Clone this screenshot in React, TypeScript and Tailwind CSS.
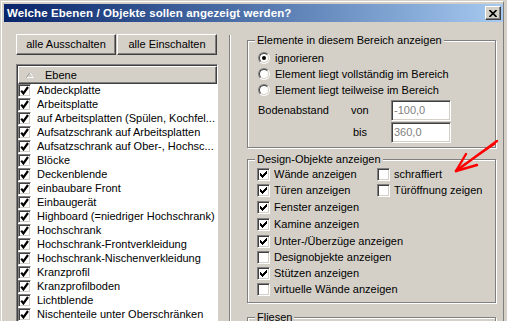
import React from 'react'

const layers = [
  'Abdeckplatte',
  'Arbeitsplatte',
  'auf Arbeitsplatten (Spülen, Kochfel...',
  'Aufsatzschrank auf Arbeitsplatten',
  'Aufsatzschrank auf Ober-, Hochsc...',
  'Blöcke',
  'Deckenblende',
  'einbaubare Front',
  'Einbaugerät',
  'Highboard (=niedriger Hochschrank)',
  'Hochschrank',
  'Hochschrank-Frontverkleidung',
  'Hochschrank-Nischenverkleidung',
  'Kranzprofil',
  'Kranzprofilboden',
  'Lichtblende',
  'Nischenteile unter Oberschränken',
]

const checkCols = [2, 3, 4, 3, 2, 1, 0]

function CheckBox({ checked }: { checked: boolean }) {
  return (
    <span className="w-[13px] h-[13px] shrink-0 border border-t-[#808080] border-l-[#808080] border-b-white border-r-white bg-white shadow-[inset_1px_1px_0_#404040,inset_-1px_-1px_0_#d4d0c8] flex items-center justify-center">
      {checked && (
        <svg width="7" height="7" viewBox="0 0 7 7" shapeRendering="crispEdges">
          {checkCols.map((y, x) => (
            <rect key={x} x={x} y={y} width="1" height="3" fill="#000" />
          ))}
        </svg>
      )}
    </span>
  )
}

function ListCheck() {
  return (
    <span className="w-[13px] h-[13px] shrink-0 border border-t-[#808080] border-l-[#808080] border-b-white border-r-white bg-white shadow-[inset_1px_1px_0_#404040,inset_-1px_-1px_0_#d4d0c8] flex items-center justify-center">
      <svg width="9" height="9" viewBox="0 0 9 9">
        <path d="M1.2 4.6 L3.4 7.4 L8 1" stroke="#000" strokeWidth="2.2" fill="none" />
      </svg>
    </span>
  )
}

function Radio({ on }: { on?: boolean }) {
  return (
    <span className="w-[12px] h-[12px] shrink-0 rounded-full border border-t-[#808080] border-l-[#808080] border-b-white border-r-white flex">
      <span className="flex-1 rounded-full border border-t-[#404040] border-l-[#404040] border-b-[#d4d0c8] border-r-[#d4d0c8] bg-white flex items-center justify-center">
        {on && <span className="w-[4px] h-[4px] rounded-full bg-black" />}
      </span>
    </span>
  )
}

function Button({ label }: { label: string }) {
  return (
    <div className="w-[100px] h-[21px] flex items-center justify-center bg-[#d4d0c8] border border-t-white border-l-white border-r-[#404040] border-b-[#404040] shadow-[inset_-1px_-1px_0_#808080]">
      {label}
    </div>
  )
}

function Group({ title, className, children }: { title: string; className?: string; children?: React.ReactNode }) {
  return (
    <div className={`relative w-[249px] border border-[#808080] shadow-[inset_1px_1px_0_#fff,1px_1px_0_#fff] ${className ?? ''}`}>
      <span className="absolute left-[7px] top-[-8px] px-[2px] bg-[#d4d0c8] leading-[14px]">{title}</span>
      {children}
    </div>
  )
}

function Field({ value }: { value: string }) {
  return (
    <div className="w-[60px] h-[21px] border border-t-[#808080] border-l-[#808080] border-b-white border-r-white bg-white shadow-[inset_1px_1px_0_#404040,inset_-1px_-1px_0_#d4d0c8] flex items-center pl-[2px] text-[#808080]">
      {value}
    </div>
  )
}

const designRows: { label: string; on: boolean; h: string; extra?: { label: string; on: boolean } }[] = [
  { label: 'Wände anzeigen', on: true, h: 'h-[16px]', extra: { label: 'schraffiert', on: false } },
  { label: 'Türen anzeigen', on: true, h: 'h-[17px]', extra: { label: 'Türöffnung zeigen', on: false } },
  { label: 'Fenster anzeigen', on: true, h: 'h-[17px]' },
  { label: 'Kamine anzeigen', on: true, h: 'h-[17px]' },
  { label: 'Unter-/Überzüge anzeigen', on: true, h: 'h-[16px]' },
  { label: 'Designobjekte anzeigen', on: false, h: 'h-[16px]' },
  { label: 'Stützen anzeigen', on: true, h: 'h-[16px]' },
  { label: 'virtuelle Wände anzeigen', on: false, h: 'h-[13px]' },
]

export default function App() {
  return (
    <div className="relative w-[507px] h-[321px] overflow-hidden bg-[#d4d0c8] pl-[1px] pt-[1px] font-['Liberation_Sans',Arial,sans-serif] text-[11px] leading-[13px] text-black">
      <div className="w-[503px] h-[330px] border-l border-t border-l-white border-t-white border-r border-r-[#808080] pl-[2px] pt-[2px] flex flex-col">
        {/* Title bar */}
        <div className="w-[499px] h-[18px] shrink-0 bg-gradient-to-r from-[#0a246a] to-[#a6caf0] flex items-center pl-[3px] pr-[2px]">
          <span className="font-bold text-white text-[11.5px] tracking-[0.1px]">Welche Ebenen / Objekte sollen angezeigt werden?</span>
          <div className="ml-auto w-[16px] h-[14px] bg-[#d4d0c8] border border-t-white border-l-white border-r-[#404040] border-b-[#404040] shadow-[inset_-1px_-1px_0_#808080] flex items-center justify-center">
            <svg width="8" height="7" viewBox="0 0 8 7">
              <path d="M0.5 0 L7.5 7 M7.5 0 L0.5 7" stroke="#000" strokeWidth="1.6" />
            </svg>
          </div>
        </div>

        <div className="flex flex-1">
          {/* Left pane */}
          <div className="w-[225px] shrink-0 pl-[12px] pt-[12px] flex flex-col">
            <div className="flex gap-[1px]">
              <Button label="alle Ausschalten" />
              <Button label="alle Einschalten" />
            </div>
            <div className="mt-[9px] w-[202px] flex-1 border border-t-[#808080] border-l-[#808080] border-r-white bg-white shadow-[inset_1px_1px_0_#404040]">
              <div className="ml-px mt-px h-[18px] bg-[#d4d0c8] border border-t-white border-l-white border-r-[#404040] border-b-[#404040] shadow-[inset_-1px_-1px_0_#808080] flex items-center">
                <svg className="ml-[7px]" width="8" height="6" viewBox="0 0 8 6">
                  <path d="M4 0.5 L7.5 5.5 L0.5 5.5 Z" fill="#d4d0c8" stroke="#a0a0a0" strokeWidth="1" />
                  <path d="M1 5.5 L7.5 5.5 L4 0.5" fill="none" stroke="#fff" strokeWidth="1" />
                </svg>
                <span className="ml-[11px]">Ebene</span>
              </div>
              <div className="pl-px">
                {layers.map((l) => (
                  <div key={l} className="h-[14px] flex items-start gap-[6px] whitespace-nowrap">
                    <ListCheck />
                    <span className="leading-[13px]">{l}</span>
                  </div>
                ))}
              </div>
            </div>
          </div>

          {/* Splitter */}
          <div className="mt-[13px] w-[2px] shrink-0 border-l border-l-[#808080] border-r border-r-white" />

          {/* Right pane */}
          <div className="pl-[16px] pt-[18px] flex flex-col">
            <Group title="Elemente in diesem Bereich anzeigen" className="h-[108px] pt-[9px] pl-[10px]">
              {['ignorieren', 'Element liegt vollständig im Bereich', 'Element liegt teilweise im Bereich'].map((t, i) => (
                <div key={t} className="h-[16px] flex items-center gap-[5px]">
                  <Radio on={i === 0} />
                  <span>{t}</span>
                </div>
              ))}
              <div className="mt-[2px] flex items-center">
                <span className="w-[93px]">Bodenabstand</span>
                <span className="w-[40px]">von</span>
                <Field value="-100,0" />
              </div>
              <div className="mt-px flex items-center">
                <span className="w-[95px]" />
                <span className="w-[38px]">bis</span>
                <Field value="360,0" />
              </div>
            </Group>

            <Group title="Design-Objekte anzeigen" className="mt-[11px] h-[144px] pt-[8px] pl-[9px]">
              {designRows.map((r) => (
                <div key={r.label} className={`${r.h} flex items-start`}>
                  <div className="w-[120px] flex items-center gap-[4px] whitespace-nowrap">
                    <CheckBox checked={r.on} />
                    <span>{r.label}</span>
                  </div>
                  {r.extra && (
                    <div className="flex items-center gap-[4px] whitespace-nowrap">
                      <CheckBox checked={r.extra.on} />
                      <span>{r.extra.label}</span>
                    </div>
                  )}
                </div>
              ))}
            </Group>

            <Group title="Fliesen" className="mt-[14px] h-[40px]" />
          </div>
        </div>
      </div>

      {/* Red annotation arrow */}
      <svg className="absolute left-0 top-0 pointer-events-none" width="507" height="321" viewBox="0 0 507 321">
        <g stroke="#ff0000" strokeWidth="2.4" strokeLinecap="round" strokeLinejoin="round" fill="none">
          <path d="M497 141 L456 171" />
          <path d="M495 144 L462 166" strokeWidth="1.4" />
          <path d="M456 171 L466 154" />
          <path d="M456 171 L477 165" />
        </g>
      </svg>
    </div>
  )
}
